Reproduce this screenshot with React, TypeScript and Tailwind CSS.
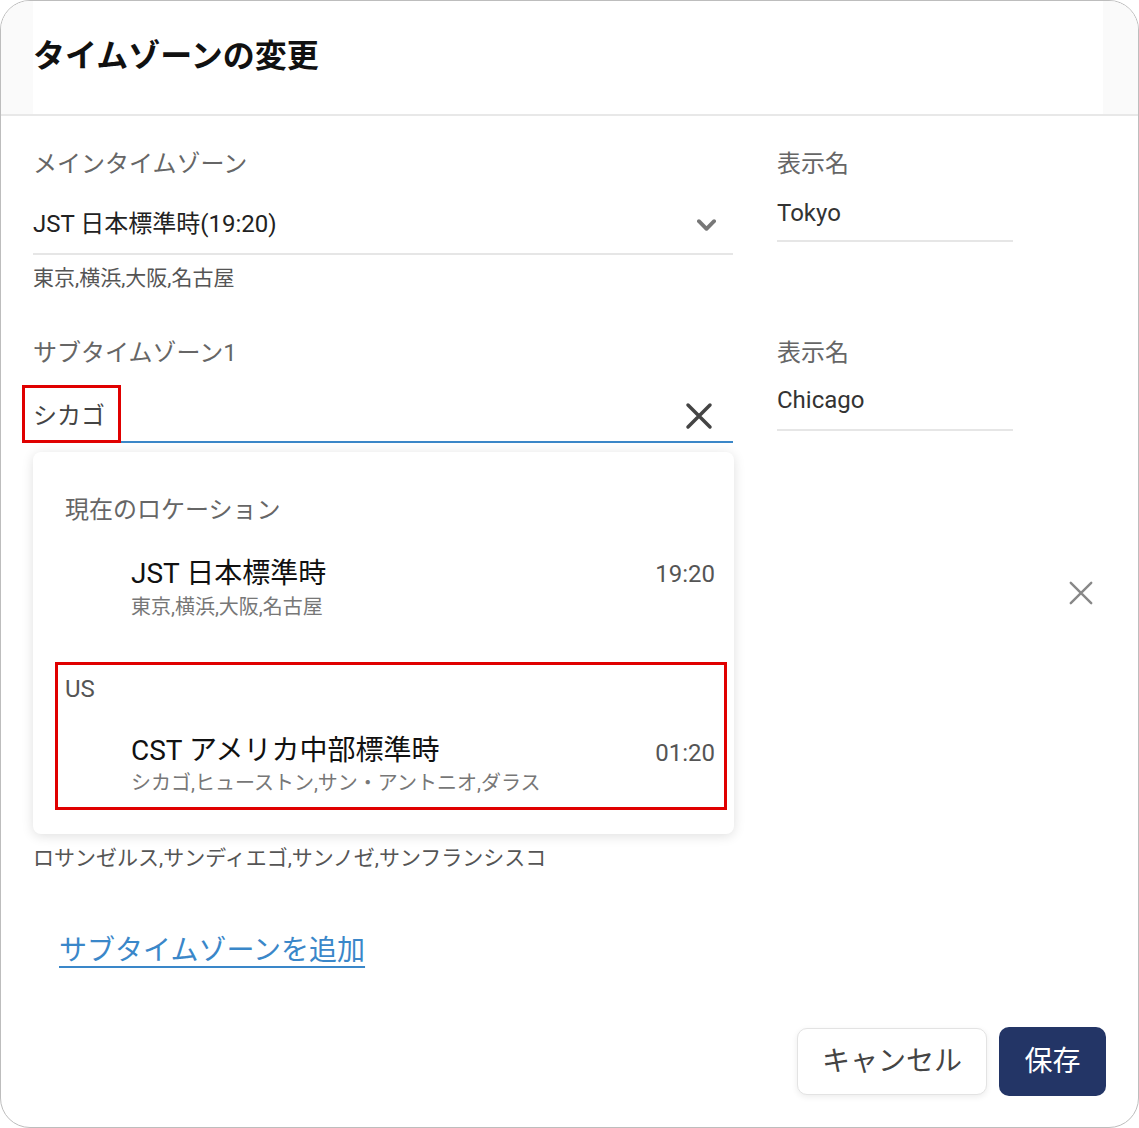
import React from 'react'

const font = { fontFamily: 'Roboto, "Noto Sans CJK JP", sans-serif' }

function CloseIcon({ className, stroke = 3 }: { className: string; stroke?: number }) {
  return (
    <svg viewBox="0 0 28 28" className={className} fill="none" stroke="currentColor" strokeWidth={stroke} strokeLinecap="round">
      <path d="M3 3 L25 25 M25 3 L3 25" />
    </svg>
  )
}

export default function App() {
  return (
    <div style={font} className="w-[1139px] h-[1128px] bg-white">
      <div className="relative w-[1139px] h-[1128px] border border-[#bdbdbd] rounded-[30px] overflow-hidden bg-white">
        {/* header */}
        <div className="h-[115px] bg-[#fafafa] border-b-2 border-[#e8e8e8] pl-[32px] pr-[35px]">
          <div className="h-full bg-white flex items-center">
            <h1 className="text-[32px] leading-[40px] font-bold text-[#111] -mt-[4px]">タイムゾーンの変更</h1>
          </div>
        </div>

        <div className="pl-[32px]">
          {/* main timezone */}
          <div className="flex pt-[32px]">
            <div className="w-[700px]">
              <div className="text-[24px] leading-[32px] text-[#666]">メインタイムゾーン</div>
              <div className="mt-[28px] flex items-start justify-between pb-[13px] border-b-2 border-[#e6e6e6]">
                <span className="text-[24px] leading-[32px] text-[#222]">JST 日本標準時(19:20)</span>
                <svg viewBox="0 0 20 12" className="w-[19px] h-[12px] mt-[11px] mr-[17px] text-[#777]" fill="none" stroke="currentColor" strokeWidth={4} strokeLinecap="round" strokeLinejoin="round">
                  <polyline points="2,2 10,10 18,2" />
                </svg>
              </div>
              <div className="mt-[9px] text-[21px] leading-[28px] text-[#555]">東京,横浜,大阪,名古屋</div>
            </div>
            <div className="w-[236px] ml-[44px]">
              <div className="text-[24px] leading-[32px] text-[#666]">表示名</div>
              <div className="mt-[17px] pb-[11px] border-b-2 border-[#e6e6e6] text-[24px] leading-[32px] text-[#333]">Tokyo</div>
            </div>
          </div>

          {/* sub timezone 1 */}
          <div className="flex mt-[45px]">
            <div className="w-[700px]">
              <div className="text-[24px] leading-[32px] text-[#666]">サブタイムゾーン1</div>
              <div className="mt-[31px] flex items-center justify-between pb-[9px] border-b-2 border-[#3b87c8]">
                <span className="relative text-[24px] leading-[32px] text-[#444]">
                  シカゴ
                  <span className="absolute -left-[11px] -top-[15px] w-[99px] h-[58px] border-[3px] border-[#e00000]" />
                </span>
                <CloseIcon className="w-[28px] h-[28px] mr-[20px] text-[#444]" stroke={3.5} />
              </div>
            </div>
            <div className="w-[236px] ml-[44px]">
              <div className="text-[24px] leading-[32px] text-[#666]">表示名</div>
              <div className="mt-[15px] pb-[13px] border-b-2 border-[#e6e6e6] text-[24px] leading-[32px] text-[#333]">Chicago</div>
            </div>
          </div>

          {/* sub timezone 2 (mostly under the dropdown) */}
          <div className="flex">
            <div className="w-[700px] pt-[401px]">
              <div className="text-[21px] leading-[28px] text-[#555]">ロサンゼルス,サンディエゴ,サンノゼ,サンフランシスコ</div>
            </div>
            <div className="w-[236px] ml-[44px]" />
            <div className="ml-[55px] pt-[137px]">
              <CloseIcon className="w-[26px] h-[26px] text-[#888]" stroke={2.6} />
            </div>
          </div>

          <div className="mt-[61px] ml-[26px]">
            <a className="text-[28px] leading-[36px] text-[#3a87c9] underline decoration-2 underline-offset-[6px]">サブタイムゾーンを追加</a>
          </div>
        </div>

        {/* dropdown */}
        <div className="absolute left-[32px] top-[451px] w-[701px] h-[382px] bg-white rounded-[8px] shadow-[0_2px_12px_rgba(0,0,0,0.13)]">
          <div className="pt-[42px] pl-[32px] text-[24px] leading-[32px] text-[#666]">現在のロケーション</div>
          <div className="pl-[98px] pr-[19px] mt-[30px]">
            <div className="flex justify-between items-center">
              <span className="text-[28px] leading-[36px] text-[#111]">JST 日本標準時</span>
              <span className="text-[24px] leading-[32px] text-[#555]">19:20</span>
            </div>
            <div className="mt-[1px] text-[20px] leading-[28px] text-[#777]">東京,横浜,大阪,名古屋</div>
          </div>
          <div className="mt-[52px] pl-[32px] text-[24px] leading-[32px] text-[#555]">US</div>
          <div className="pl-[98px] pr-[19px] mt-[28px]">
            <div className="flex justify-between items-center">
              <span className="text-[28px] leading-[36px] text-[#111]">CST アメリカ中部標準時</span>
              <span className="text-[24px] leading-[32px] text-[#555] mt-[4px]">01:20</span>
            </div>
            <div className="text-[20px] leading-[28px] text-[#777]">シカゴ,ヒューストン,サン・アントニオ,ダラス</div>
          </div>
          <div className="absolute left-[22px] top-[210px] w-[672px] h-[148px] border-[3px] border-[#e00000]" />
        </div>

        {/* buttons */}
        <div className="absolute right-[32px] bottom-[31px] flex items-center gap-[12px]">
          <button className="w-[190px] h-[67px] bg-white border border-[#e3e3e3] rounded-[10px] shadow-[0_2px_6px_rgba(0,0,0,0.08)] text-[28px] text-[#444]">キャンセル</button>
          <button className="w-[107px] h-[69px] bg-[#233566] rounded-[10px] text-[28px] text-white">保存</button>
        </div>
      </div>
    </div>
  )
}
